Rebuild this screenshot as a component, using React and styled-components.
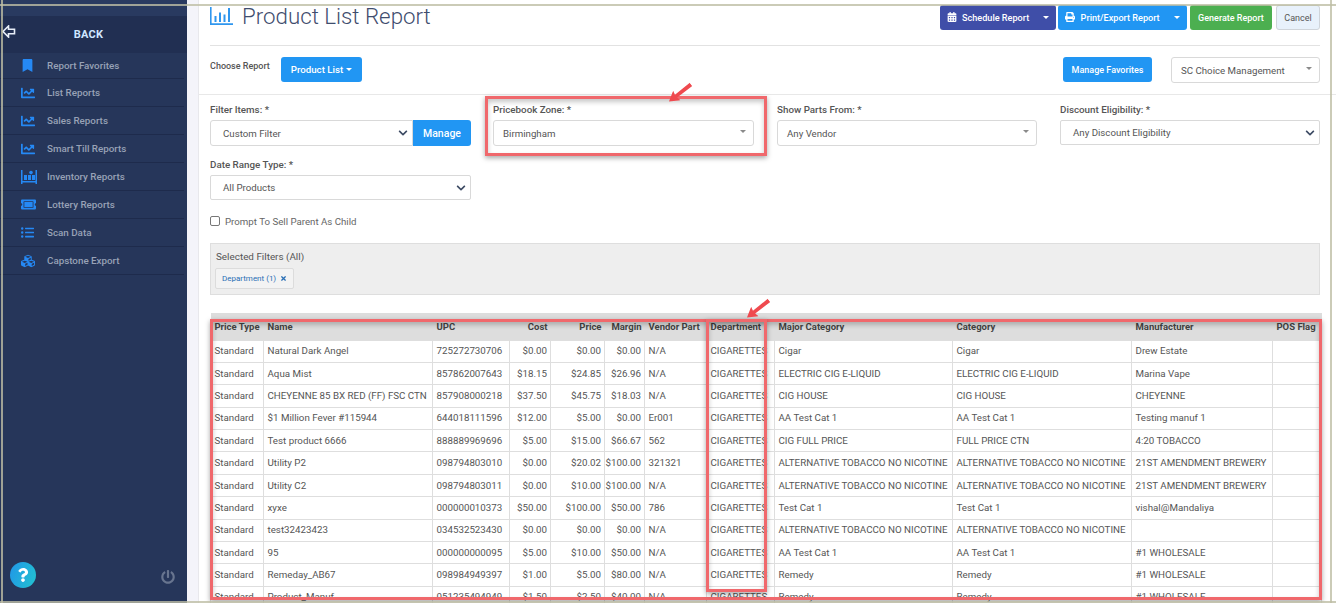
import styled, { createGlobalStyle } from 'styled-components'
import {
  FaBookmark, FaChartLine, FaTicketAlt, FaListUl, FaCubes, FaPowerOff,
  FaCalendarAlt, FaPrint, FaChevronDown, FaTimes, FaQuestion,
} from 'react-icons/fa'

const menuItems = [
  { label: 'Report Favorites', icon: <FaBookmark size={13} /> },
  { label: 'List Reports', icon: <FaChartLine size={14} /> },
  { label: 'Sales Reports', icon: <FaChartLine size={14} /> },
  { label: 'Smart Till Reports', icon: <FaChartLine size={14} /> },
  { label: 'Inventory Reports', icon: <PalletIcon /> },
  { label: 'Lottery Reports', icon: <FaTicketAlt size={15} /> },
  { label: 'Scan Data', icon: <FaListUl size={13} /> },
  { label: 'Capstone Export', icon: <FaCubes size={14} /> },
]

const columns = [
  { title: 'Price Type', width: 53 },
  { title: 'Name', width: 169 },
  { title: 'UPC', width: 77 },
  { title: 'Cost', width: 41, right: true },
  { title: 'Price', width: 54, right: true },
  { title: 'Margin', width: 40, right: true },
  { title: 'Vendor Part', width: 62 },
  { title: 'Department', width: 68 },
  { title: 'Major Category', width: 178 },
  { title: 'Category', width: 179 },
  { title: 'Manufacturer', width: 141 },
  { title: 'POS Flag', width: 49 },
]

const ALT = 'ALTERNATIVE TOBACCO NO NICOTINE'
const rows = [
  ['Natural Dark Angel', '725272730706', '$0.00', '$0.00', '$0.00', 'N/A', 'Cigar', 'Cigar', 'Drew Estate'],
  ['Aqua Mist', '857862007643', '$18.15', '$24.85', '$26.96', 'N/A', 'ELECTRIC CIG E-LIQUID', 'ELECTRIC CIG E-LIQUID', 'Marina Vape'],
  ['CHEYENNE 85 BX RED (FF) FSC CTN', '857908000218', '$37.50', '$45.75', '$18.03', 'N/A', 'CIG HOUSE', 'CIG HOUSE', 'CHEYENNE'],
  ['$1 Million Fever #115944', '644018111596', '$12.00', '$5.00', '$0.00', 'Er001', 'AA Test Cat 1', 'AA Test Cat 1', 'Testing manuf 1'],
  ['Test product 6666', '888889969696', '$5.00', '$15.00', '$66.67', '562', 'CIG FULL PRICE', 'FULL PRICE CTN', '4:20 TOBACCO'],
  ['Utility P2', '098794803010', '$0.00', '$20.02', '$100.00', '321321', ALT, ALT, '21ST AMENDMENT BREWERY'],
  ['Utility C2', '098794803011', '$0.00', '$10.00', '$100.00', 'N/A', ALT, ALT, '21ST AMENDMENT BREWERY'],
  ['xyxe', '000000010373', '$50.00', '$100.00', '$50.00', '786', 'Test Cat 1', 'Test Cat 1', 'vishal@Mandaliya'],
  ['test32423423', '034532523430', '$0.00', '$0.00', '$0.00', 'N/A', ALT, ALT, ''],
  ['95', '000000000095', '$5.00', '$10.00', '$50.00', 'N/A', 'AA Test Cat 1', 'AA Test Cat 1', '#1 WHOLESALE'],
  ['Remeday_AB67', '098984949397', '$1.00', '$5.00', '$80.00', 'N/A', 'Remedy', 'Remedy', '#1 WHOLESALE'],
  ['Product_Manuf', '051235494949', '$1.50', '$2.50', '$40.00', 'N/A', 'Remedy', 'Remedy', '#1 WHOLESALE'],
]

function PalletIcon() {
  return (
    <svg width="16" height="14" viewBox="0 0 16 14" fill="currentColor">
      <path d="M0 0h1.500v11h13V0H16v14h-1.500v-1.500h-13V14H0z" />
      <path d="M3 5h3v5H3zM7 5h3v5H7zM11 5h3v5h-3z" />
      <circle cx="10" cy="2.600" r="1.800" />
    </svg>
  )
}

function BackIcon() {
  return (
    <svg width="14" height="13" viewBox="0 0 14 13" fill="none" stroke="#e8eef8" strokeWidth="1.600">
      <path d="M6.500 1 1 6.500 6.500 12V8.800h6V4.200h-6z" />
    </svg>
  )
}

function BarsIcon() {
  return (
    <svg width="23" height="18" viewBox="0 0 23 18" fill="#2f96ee">
      <path d="M0 0h1.600v16.200H23V18H0z" />
      <path d="M4.500 9h2v6h-2zM9 5.500h2V15H9zM13.500 7.500h2V15h-2zM18 1h2v14h-2z" />
    </svg>
  )
}

function RedArrow({ x, y, rotate }) {
  return (
    <ArrowHolder $x={x} $y={y} $rotate={rotate}>
      <svg width="28" height="12" viewBox="0 0 28 12" fill="#ef4a4f">
        <path d="M0 6 10 0 9 4.200 28 4V8L9 7.800 10 12z" />
      </svg>
    </ArrowHolder>
  )
}

export default function App() {
  return (
    <Page>
      <GlobalStyle />
      <Sidebar>
        <SidebarCap />
        <BackRow>
          <BackIconSlot><BackIcon /></BackIconSlot>
          BACK
        </BackRow>
        <Menu>
          {menuItems.map((item) => (
            <MenuRow key={item.label}>
              <MenuIcon>{item.icon}</MenuIcon>
              {item.label}
            </MenuRow>
          ))}
        </Menu>
        <SidebarFoot>
          <HelpBadge><FaQuestion size={14} /></HelpBadge>
          <PowerButton><FaPowerOff size={14} /></PowerButton>
        </SidebarFoot>
      </Sidebar>
      <Gutter />
      <Main>
        <Padded>
          <TopBar>
            <Title>
              <BarsIcon />
              <h1>Product List Report</h1>
            </Title>
            <Actions>
              <SplitButton $bg="#3f4ea8" $w={116}>
                <span><FaCalendarAlt size={10} /> Schedule Report</span>
                <SmallCaret />
              </SplitButton>
              <SplitButton $bg="#2196f3" $w={129} $gap={2}>
                <span><FaPrint size={10} /> Print/Export Report</span>
                <SmallCaret />
              </SplitButton>
              <GreenButton>Generate Report</GreenButton>
              <CancelButton>Cancel</CancelButton>
            </Actions>
          </TopBar>
        </Padded>
        <ChooseBar>
          <ChooseLabel>Choose Report</ChooseLabel>
          <BlueButton $w={81}>Product List <SmallCaret /></BlueButton>
          <Spacer />
          <BlueButton $w={89} $small>Manage Favorites</BlueButton>
          <Field $w={149} $left={19}>
            SC Choice Management
            <FieldCaret />
          </Field>
        </ChooseBar>
        <Padded>
          <FilterGrid>
            <FilterCell>
              <FieldLabel>Filter Items: *</FieldLabel>
              <InputGroup>
                <Field $flat $pad={12}>Custom Filter<Chevron><FaChevronDown size={10} /></Chevron></Field>
                <ManageButton>Manage</ManageButton>
              </InputGroup>
            </FilterCell>
            <FilterCell>
              <FieldLabel>Pricebook Zone: *</FieldLabel>
              <Field>Birmingham<FieldCaret /></Field>
            </FilterCell>
            <FilterCell>
              <FieldLabel>Show Parts From: *</FieldLabel>
              <Field>Any Vendor<FieldCaret /></Field>
            </FilterCell>
            <FilterCell>
              <FieldLabel>Discount Eligibility: *</FieldLabel>
              <Field $pad={12} $square>Any Discount Eligibility<Chevron><FaChevronDown size={10} /></Chevron></Field>
            </FilterCell>
            <FilterCell>
              <FieldLabel>Date Range Type: *</FieldLabel>
              <Field $pad={12} $square>All Products<Chevron><FaChevronDown size={10} /></Chevron></Field>
            </FilterCell>
          </FilterGrid>
          <CheckRow>
            <CheckBox />
            Prompt To Sell Parent As Child
          </CheckRow>
          <FiltersPanel>
            <PanelTitle>Selected Filters (All)</PanelTitle>
            <Chip>Department (1) <FaTimes size={7} /></Chip>
          </FiltersPanel>
          <ReportTable>
            <colgroup>
              {columns.map((c) => <Col key={c.title} $w={c.width} />)}
            </colgroup>
            <thead>
              <tr>
                {columns.map((c) => <Th key={c.title} $right={c.right}>{c.title}</Th>)}
              </tr>
            </thead>
            <tbody>
              {rows.map((r) => (
                <tr key={r[0]}>
                  <Td>Standard</Td>
                  <Td>{r[0]}</Td>
                  <Td>{r[1]}</Td>
                  <Td $right>{r[2]}</Td>
                  <Td $right>{r[3]}</Td>
                  <Td $right>{r[4]}</Td>
                  <Td>{r[5]}</Td>
                  <Td>CIGARETTES</Td>
                  <Td>{r[6]}</Td>
                  <Td>{r[7]}</Td>
                  <Td>{r[8]}</Td>
                  <Td />
                </tr>
              ))}
            </tbody>
          </ReportTable>
        </Padded>
      </Main>

      <RedBox $x={485} $y={96} $w={282} $h={60} />
      <RedArrow x={666} y={87} rotate={-38} />
      <RedBox $x={210} $y={319} $w={1112} $h={281} />
      <RedBox $x={706} $y={319} $w={61} $h={273} />
      <RedArrow x={744} y={303} rotate={-38} />
      <FrameLine $top={4} />
      <FrameLine $top={601} />
      <FrameLine $vertical $left={1} />
      <FrameLine $vertical $left={1330} />
    </Page>
  )
}

const GlobalStyle = createGlobalStyle`
  html, body {
    margin: 0;
    padding: 0;
    background: #fff;
    font-family: Roboto, "Liberation Sans", sans-serif;
  }
  * { box-sizing: border-box; }
`

const Page = styled.div`
  position: relative;
  display: flex;
  width: 1336px;
  height: 603px;
  overflow: hidden;
  font-size: 10px;
  color: #555;
`

const Sidebar = styled.aside`
  width: 187px;
  flex: none;
  display: flex;
  flex-direction: column;
  background: #26365a;
`

const SidebarCap = styled.div`
  height: 16px;
  background: #293a60;
`

const BackRow = styled.div`
  position: relative;
  height: 37px;
  padding-right: 10px;
  padding-bottom: 1px;
  display: flex;
  align-items: center;
  justify-content: center;
  background: #212f52;
  color: #cfe6ff;
  font-size: 11px;
  font-weight: 700;
  letter-spacing: 0.2px;
`

const BackIconSlot = styled.span`
  position: absolute;
  left: 2px;
  top: 9px;
  display: flex;
`

const Menu = styled.nav`
  display: flex;
  flex-direction: column;
`

const MenuRow = styled.div`
  height: 28px;
  display: flex;
  align-items: center;
  margin-right: 3px;
  border-bottom: 1px solid #1e2b4c;
  color: #98a2b6;
  font-size: 9.800px;
  font-weight: 500;
  &:first-child { height: 26px; }
`

const MenuIcon = styled.span`
  width: 47px;
  padding-left: 21px;
  display: flex;
  color: #2589f5;
`

const SidebarFoot = styled.div`
  margin-top: auto;
  height: 52px;
  padding: 11px 12px 0 10px;
  display: flex;
  justify-content: space-between;
`

const HelpBadge = styled.div`
  width: 26px;
  height: 26px;
  border-radius: 50%;
  display: flex;
  align-items: center;
  justify-content: center;
  color: #fff;
  background: linear-gradient(110deg, #2196e8, #22c3d0);
`

const PowerButton = styled.div`
  margin-top: 8px;
  color: #68758f;
  display: flex;
`

const Gutter = styled.div`
  width: 12px;
  flex: none;
  background: #f4f4fa;
  border-right: 1px solid #e8e8ec;
`

const Main = styled.main`
  flex: 1;
  min-width: 0;
`

const Padded = styled.div`
  padding: 0 16px 0 11px;
`

const TopBar = styled.div`
  height: 46px;
  display: flex;
  justify-content: space-between;
  align-items: flex-start;
  padding-top: 5px;
  border-bottom: 1px solid #e2e2e2;
`

const Title = styled.div`
  display: flex;
  align-items: center;
  gap: 9px;
  margin-top: -3px;
  h1 {
    margin: 0;
    font-size: 22.300px;
    font-weight: 300;
    line-height: 28px;
    color: #3f4d6e;
  }
`

const Actions = styled.div`
  display: flex;
`

const SplitButton = styled.div`
  width: ${(p) => p.$w}px;
  height: 25px;
  margin-left: ${(p) => p.$gap || 0}px;
  display: flex;
  align-items: center;
  border-radius: 3px;
  overflow: hidden;
  color: #fff;
  font-size: 9.100px;
  font-weight: 500;
  background: ${(p) => p.$bg};
  span:first-child {
    flex: 1;
    text-align: center;
  }
  span:last-child {
    margin: 0 7px;
  }
  svg { vertical-align: -1px; margin-right: 3px; }
`

const SmallCaret = styled.span`
  display: inline-block;
  width: 0;
  height: 0;
  border-left: 3px solid transparent;
  border-right: 3px solid transparent;
  border-top: 3px solid #fff;
  vertical-align: middle;
`

const GreenButton = styled.div`
  width: 82px;
  height: 25px;
  margin-left: 3px;
  display: flex;
  align-items: center;
  justify-content: center;
  background: #4caf50;
  border-radius: 3px;
  color: #fff;
  font-size: 9px;
  font-weight: 500;
`

const CancelButton = styled.div`
  width: 44px;
  height: 25px;
  margin-left: 4px;
  display: flex;
  align-items: center;
  justify-content: center;
  background: #e8f1fb;
  border: 1px solid #cfd4da;
  border-radius: 3px;
  color: #555;
  font-size: 9px;
`

const ChooseBar = styled.div`
  height: 49px;
  padding: 11px 16px 0 11px;
  display: flex;
  align-items: flex-start;
  border-bottom: 1px solid #e8e8e8;
`

const ChooseLabel = styled.div`
  width: 71px;
  margin-top: 4px;
  font-size: 9px;
  font-weight: 500;
  color: #555;
`

const BlueButton = styled.div`
  width: ${(p) => p.$w}px;
  height: 25px;
  display: flex;
  align-items: center;
  justify-content: center;
  gap: 3px;
  background: #2196f3;
  border-radius: 3px;
  color: #fff;
  font-size: ${(p) => (p.$small ? 9 : 9.7)}px;
  font-weight: 500;
`

const Spacer = styled.div`
  flex: 1;
`

const Field = styled.div`
  position: relative;
  width: ${(p) => (p.$w ? `${p.$w}px` : '100%')};
  height: ${(p) => (p.$square ? 25 : 26)}px;
  margin-left: ${(p) => p.$left || 0}px;
  flex: ${(p) => (p.$flat ? 1 : 'none')};
  padding-left: ${(p) => p.$pad || 9}px;
  display: flex;
  align-items: center;
  background: #fff;
  border: 1px solid #d9d9d9;
  border-radius: ${(p) => (p.$flat ? '3px 0 0 3px' : p.$square ? '2px' : '3px')};
  color: #555;
  font-size: 9.700px;
`

const FieldCaret = styled.span`
  position: absolute;
  right: 7px;
  top: 9px;
  width: 0;
  height: 0;
  border-left: 3px solid transparent;
  border-right: 3px solid transparent;
  border-top: 3px solid #8a8a8a;
`

const Chevron = styled.span`
  position: absolute;
  right: 4px;
  top: 7px;
  display: flex;
  color: #3c4a63;
`

const FilterGrid = styled.div`
  display: grid;
  grid-template-columns: 283px 284px 283px 260px;
  row-gap: 12px;
  padding-top: 8px;
`

const FilterCell = styled.div`
  width: 261px;
  display: flex;
  flex-direction: column;
  &:nth-child(3), &:nth-child(4) { width: 260px; }
`

const FieldLabel = styled.label`
  height: 17px;
  line-height: 13px;
  font-size: 9.800px;
  font-weight: 500;
  color: #555;
  &:last-child { height: 18px; }
`

const InputGroup = styled.div`
  display: flex;
`

const ManageButton = styled.div`
  width: 58px;
  height: 26px;
  display: flex;
  align-items: center;
  justify-content: center;
  background: #2196f3;
  border-radius: 0 3px 3px 0;
  color: #fff;
  font-size: 10.500px;
  font-weight: 500;
`

const CheckRow = styled.div`
  height: 14px;
  margin-top: 14px;
  display: flex;
  align-items: center;
  gap: 5px;
  font-size: 9.700px;
  color: #666;
`

const CheckBox = styled.span`
  width: 10px;
  height: 10px;
  border: 1px solid #777;
  border-radius: 2px;
  background: #fff;
`

const FiltersPanel = styled.div`
  height: 52px;
  margin-top: 15px;
  padding: 6px 5px 0;
  background: #eeeeee;
  border: 1px solid #dedede;
`

const PanelTitle = styled.div`
  font-size: 9.900px;
  line-height: 13px;
  color: #555;
`

const Chip = styled.div`
  display: inline-flex;
  align-items: center;
  gap: 4px;
  height: 21px;
  margin-top: 5px;
  margin-left: -1px;
  padding: 0 6px;
  background: #f3f3f3;
  border: 1px solid #dcdcdc;
  border-radius: 2px;
  color: #2a6fb5;
  font-size: 8px;
`

const ReportTable = styled.table`
  width: 1111px;
  margin-top: 18px;
  table-layout: fixed;
  border-collapse: collapse;
`

const Col = styled.col`
  width: ${(p) => p.$w}px;
`

const Th = styled.th`
  height: 27px;
  padding: 0 3px 0 4px;
  background: #dddddd;
  color: #444;
  font-size: 9.500px;
  font-weight: 700;
  white-space: nowrap;
  overflow: hidden;
  text-align: ${(p) => (p.$right ? 'right' : 'left')};
  vertical-align: middle;
`

const Td = styled.td`
  height: 22.400px;
  padding: ${(p) => (p.$right ? '0 3px 0 0' : '0 0 0 3.500px')};
  border: 1px solid #dedede;
  color: #555;
  font-size: 9.750px;
  line-height: 12px;
  white-space: nowrap;
  overflow: hidden;
  text-align: ${(p) => (p.$right ? 'right' : 'left')};
`

const RedBox = styled.div`
  position: absolute;
  left: ${(p) => p.$x}px;
  top: ${(p) => p.$y}px;
  width: ${(p) => p.$w}px;
  height: ${(p) => p.$h}px;
  border: 3px solid #f0686c;
  box-shadow: 0 2px 5px rgba(0, 0, 0, 0.35), inset 0 3px 5px rgba(0, 0, 0, 0.22);
  pointer-events: none;
`

const ArrowHolder = styled.div`
  position: absolute;
  left: ${(p) => p.$x}px;
  top: ${(p) => p.$y}px;
  display: flex;
  transform: rotate(${(p) => p.$rotate}deg);
`

const FrameLine = styled.div`
  position: absolute;
  left: ${(p) => (p.$vertical ? `${p.$left}px` : '0')};
  top: ${(p) => (p.$vertical ? '0' : `${p.$top}px`)};
  width: ${(p) => (p.$vertical ? '2px' : '100%')};
  height: ${(p) => (p.$vertical ? '100%' : '2px')};
  background: rgba(190, 190, 165, 0.8);
`
